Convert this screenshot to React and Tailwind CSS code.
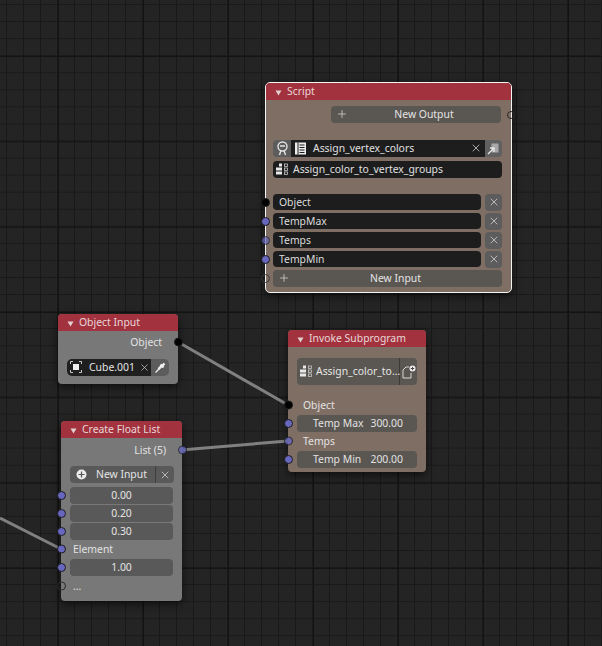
import { X, Plus } from 'lucide-react'

function Socket({ color = 'bg-[#6767c0]', side = 'left', hollow = false, dim = false }) {
  const pos = side === 'left' ? '-left-[4px]' : '-right-[4.5px]'
  if (hollow) {
    return <span className={`absolute ${pos} top-1/2 -translate-y-1/2 w-[9px] h-[9px] rounded-full border border-[#2a2a2a]`} />
  }
  return (
    <span
      className={`absolute ${pos} top-1/2 -translate-y-1/2 w-[9px] h-[9px] rounded-full border border-[#1c1c1c] ${color} ${dim ? 'opacity-80' : ''}`}
    />
  )
}

function Header({ title }) {
  return (
    <div className="h-[17px] shrink-0 rounded-t-[4px] bg-[#a3323f] flex items-center pl-[9px] gap-[5px] text-[#e8d8d8]">
      <svg width="7" height="6" viewBox="0 0 7 6" className="mt-[2px]">
        <path d="M0.5 0.5 L6.5 0.5 L3.5 5.5 Z" fill="#e0d0d0" />
      </svg>
      <span>{title}</span>
    </div>
  )
}

function Field({ children, className = '' }) {
  return (
    <div className={`h-[17px] rounded-[4px] bg-[#595959] flex items-center justify-center ${className}`}>
      {children}
    </div>
  )
}

function TextField({ label, className = '' }) {
  return (
    <div className={`h-[16px] rounded-[4px] bg-[#1d1d1d] flex items-center pl-[6px] text-[#dcdcdc] ${className}`}>
      {label}
    </div>
  )
}

function CloseBtn() {
  return (
    <div className="w-[17px] h-[17px] rounded-[4px] bg-[#5c5c5c] flex items-center justify-center">
      <X size={12} strokeWidth={1.5} color="#d8d8d8" />
    </div>
  )
}

function GroupsIcon() {
  return (
    <svg width="13" height="13" viewBox="0 0 13 13" className="shrink-0">
      <rect x="3" y="0.5" width="3" height="3" fill="#e8e8e8" />
      <rect x="0" y="4.5" width="3" height="3" fill="#e8e8e8" />
      <rect x="3" y="4.5" width="3" height="3" fill="#e8e8e8" />
      <rect x="0" y="8.5" width="3" height="3" fill="#e8e8e8" />
      <rect x="3" y="8.5" width="3" height="3" fill="#e8e8e8" />
      <rect x="8.5" y="1" width="3" height="2.5" fill="none" stroke="#c8c8c8" strokeWidth="0.8" />
      <rect x="8.5" y="5" width="3" height="2.5" fill="none" stroke="#c8c8c8" strokeWidth="0.8" />
      <rect x="8.5" y="9" width="3" height="2.5" fill="none" stroke="#c8c8c8" strokeWidth="0.8" />
    </svg>
  )
}

function ScriptNode() {
  return (
    <div className="absolute left-[265px] top-[82px] w-[247px] h-[211px] rounded-[5px] border border-[#f4f4f4] bg-[#7f6e64] flex flex-col shadow-[0_3px_8px_rgba(0,0,0,0.6)]">
      <Header title="Script" />
      <div className="relative h-[17px] mt-[6px] ml-[65px] mr-[10px]">
        <div className="h-full rounded-[4px] bg-[#5a5652] flex items-center justify-center relative text-[#e4e4e4] pb-[1px] pl-[16px]">
          <Plus size={12} strokeWidth={1.5} className="absolute left-[5px]" color="#d8d8d8" />
          New Output
        </div>
        <span className="absolute -right-[14px] top-1/2 -translate-y-1/2 w-[8px] h-[8px] rounded-full border border-[#2a2a2a]" />
      </div>

      <div className="mt-[17px] ml-[7px] mr-[9px] h-[17px] flex rounded-[4px] overflow-hidden">
        <div className="w-[18px] bg-[#5c5c5c] flex items-center justify-center">
          <svg width="13" height="15" viewBox="0 0 13 15" fill="none">
            <circle cx="6.5" cy="5.5" r="4.5" stroke="#e4e4e4" strokeWidth="1.4" />
            <path d="M4 5 h5 M3.5 14 L5 9.5 M9.5 14 L8 9.5" stroke="#e4e4e4" strokeWidth="1.4" />
          </svg>
        </div>
        <div className="flex-1 bg-[#1d1d1d] flex items-center text-[#e0e0e0] relative pl-[4px] gap-[7px] pb-[1px]">
          <svg width="11" height="13" viewBox="0 0 11 13">
            <rect x="0" y="0.5" width="11" height="12" fill="#ececec" />
            <path d="M3 0.5 V12.5 M4.5 3 H9.5 M4.5 5.5 H9.5 M4.5 8 H9.5 M4.5 10.5 H9.5" stroke="#1d1d1d" strokeWidth="1" />
          </svg>
          Assign_vertex_colors
          <X size={12} strokeWidth={1.5} color="#d8d8d8" className="absolute right-[3px]" />
        </div>
        <div className="w-[17px] bg-[#606060] flex items-center justify-center">
          <svg width="13" height="13" viewBox="0 0 13 13" fill="none">
            <rect x="4.5" y="1.5" width="7" height="9" fill="#a8a8a8" />
            <path d="M1 12 L6.5 6.5 M3 6 H7 V10" stroke="#e8e8e8" strokeWidth="1.3" />
          </svg>
        </div>
      </div>
      <div className="mt-[4px] ml-[7px] mr-[9px] h-[17px] rounded-[4px] bg-[#1d1d1d] flex items-center pl-[3px] gap-[4px] pb-[1px] text-[#e0e0e0]">
        <GroupsIcon />
        Assign_color_to_vertex_groups
      </div>

      <div className="mt-[16px] ml-[7px] mr-[9px] flex flex-col gap-[3px]">
        {[
          { label: 'Object', color: 'bg-[#000000]' },
          { label: 'TempMax' },
          { label: 'Temps', dim: true },
          { label: 'TempMin' },
        ].map(row => (
          <div key={row.label} className="relative flex items-center gap-[4px] h-[16px]">
            <span className={`absolute -left-[12px] w-[9px] h-[9px] rounded-full border border-[#1c1c1c] ${row.color ?? 'bg-[#6767c0]'} ${row.dim ? 'opacity-70' : ''}`} />
            <TextField label={row.label} className="flex-1" />
            <CloseBtn />
          </div>
        ))}
      </div>
      <div className="relative mt-[3px] ml-[7px] mr-[9px] h-[17px]">
        <span className="absolute -left-[12px] top-[4px] w-[9px] h-[9px] rounded-full border border-[#3a3a3a]" />
        <div className="h-full rounded-[4px] bg-[#5a5652] flex items-center justify-center relative text-[#e4e4e4] pb-[1px] pl-[16px]">
          <Plus size={12} strokeWidth={1.5} className="absolute left-[5px]" color="#d8d8d8" />
          New Input
        </div>
      </div>
    </div>
  )
}

function ObjectInputNode() {
  return (
    <div className="absolute left-[58px] top-[314px] w-[120px] h-[70px] rounded-[4px] bg-[#787878] flex flex-col shadow-[0_3px_8px_rgba(0,0,0,0.6)]">
      <Header title="Object Input" />
      <div className="relative h-[22px] flex items-center justify-end pr-[16px] text-[#e2e2e2]">
        Object
        <Socket color="bg-[#000000]" side="right" />
      </div>
      <div className="mt-[6px] mx-[9px] h-[17px] flex rounded-[5px] overflow-hidden">
        <div className="flex-1 bg-[#1f1f1f] flex items-center pl-[3px] gap-[7px] pb-[1px] relative text-[#e4e4e4]">
          <svg width="12" height="12" viewBox="0 0 12 12" fill="none">
            <path d="M0.5 3 V0.5 H3 M9 0.5 H11.5 V3 M11.5 9 V11.5 H9 M3 11.5 H0.5 V9" stroke="#c8c8c8" strokeWidth="1" />
            <rect x="3" y="3" width="6" height="6" fill="#f0f0f0" />
          </svg>
          Cube.001
          <X size={11} strokeWidth={1.5} color="#d8d8d8" className="absolute right-[1px]" />
        </div>
        <div className="w-[18px] bg-[#5c5c5c] flex items-center justify-center">
          <svg width="13" height="13" viewBox="0 0 13 13" fill="none">
            <path d="M1.5 11.5 L7 6" stroke="#f0f0f0" strokeWidth="1.2" />
            <path d="M4.5 8 L7.5 5" stroke="#f0f0f0" strokeWidth="2.4" />
            <path d="M6.5 3.5 L9.5 6.5 M8.5 4.5 L10.5 2.5" stroke="#f0f0f0" strokeWidth="2.4" />
          </svg>
        </div>
      </div>
    </div>
  )
}

function InvokeNode() {
  return (
    <div className="absolute left-[288px] top-[330px] w-[138px] h-[142px] rounded-[4px] bg-[#7f6e64] flex flex-col shadow-[0_3px_8px_rgba(0,0,0,0.6)]">
      <Header title="Invoke Subprogram" />
      <div className="mt-[11px] mx-[9px] h-[27px] flex rounded-[4px] overflow-hidden bg-[#5a5652] text-[#e6e6e6]">
        <div className="flex-1 min-w-0 flex items-center pl-[3px] gap-[3px] pb-[1px] border-r border-[#3c3a38]">
          <GroupsIcon />
          <span>Assign_color_to...</span>
        </div>
        <div className="w-[17px] shrink-0 flex items-center justify-center">
          <svg width="14" height="14" viewBox="0 0 14 14" fill="none">
            <path d="M1 13 V5 L4 2 H7 M1 13 H9 V8" stroke="#d8d8d8" strokeWidth="1" />
            <circle cx="10.5" cy="3.5" r="3" fill="#f0f0f0" />
            <path d="M10.5 1.8 V5.2 M8.8 3.5 H12.2" stroke="#444" strokeWidth="1" />
          </svg>
        </div>
      </div>
      <div className="mt-[11px] flex flex-col text-[#e2e2e2]">
        <div className="relative h-[18px] flex items-center pl-[15px]">
          <Socket color="bg-[#000000]" />
          Object
        </div>
        <div className="relative h-[18px] mx-[9px] flex items-center">
          <span className="absolute -left-[13px] w-[9px] h-[9px] rounded-full border border-[#1c1c1c] bg-[#6767c0]" />
          <div className="w-full h-[17px] rounded-[4px] bg-[#5a5652] flex items-center justify-between pl-[16px] pr-[14px]">
            <span>Temp Max</span>
            <span>300.00</span>
          </div>
        </div>
        <div className="relative h-[18px] flex items-center pl-[15px]">
          <Socket dim />
          Temps
        </div>
        <div className="relative h-[18px] mx-[9px] flex items-center">
          <span className="absolute -left-[13px] w-[9px] h-[9px] rounded-full border border-[#1c1c1c] bg-[#6767c0]" />
          <div className="w-full h-[17px] rounded-[4px] bg-[#5a5652] flex items-center justify-between pl-[16px] pr-[14px]">
            <span>Temp Min</span>
            <span>200.00</span>
          </div>
        </div>
      </div>
    </div>
  )
}

function FloatRow({ value }) {
  return (
    <div className="relative h-[18px] mx-[9px] flex items-center">
      <span className="absolute -left-[13px] w-[9px] h-[9px] rounded-full border border-[#1c1c1c] bg-[#6767c0]" />
      <Field className="w-full text-[#e4e4e4]">{value}</Field>
    </div>
  )
}

function FloatListNode() {
  return (
    <div className="absolute left-[61px] top-[421px] w-[121px] h-[180px] rounded-[4px] bg-[#787878] flex flex-col shadow-[0_3px_8px_rgba(0,0,0,0.6)]">
      <Header title="Create Float List" />
      <div className="relative h-[24px] flex items-center justify-end pr-[16px] text-[#e2e2e2]">
        List (5)
        <Socket side="right" dim />
      </div>
      <div className="mt-[4px] ml-[9px] mr-[8px] h-[17px] flex rounded-[4px] overflow-hidden bg-[#595959] text-[#e4e4e4]">
        <div className="flex-1 flex items-center pl-[6px] gap-[9px] pb-[1px] border-r border-[#3e3e3e]">
          <svg width="11" height="11" viewBox="0 0 11 11" className="mt-[1px]">
            <circle cx="5.5" cy="5.5" r="5" fill="#ececec" />
            <path d="M5.5 2.5 V8.5 M2.5 5.5 H8.5" stroke="#555" strokeWidth="1.2" />
          </svg>
          New Input
        </div>
        <div className="w-[18px] flex items-center justify-center">
          <X size={12} strokeWidth={1.5} color="#d8d8d8" />
        </div>
      </div>
      <div className="mt-[3px] flex flex-col">
        <FloatRow value="0.00" />
        <FloatRow value="0.20" />
        <FloatRow value="0.30" />
        <div className="relative h-[18px] flex items-center pl-[12px] text-[#e2e2e2]">
          <Socket />
          Element
        </div>
        <FloatRow value="1.00" />
        <div className="relative h-[20px] flex items-center pl-[12px] text-[#e2e2e2]">
          <Socket hollow />
          ...
        </div>
      </div>
    </div>
  )
}

export default function App() {
  return (
    <div className="relative w-[602px] h-[646px] overflow-hidden font-['Noto_Sans',sans-serif] text-[10.4px] leading-none bg-[#242424]">
      <div className="absolute inset-0 bg-[linear-gradient(to_right,#131313_1px,transparent_1px),linear-gradient(to_bottom,#131313_1px,transparent_1px),linear-gradient(to_right,#191919_1px,transparent_1px),linear-gradient(to_bottom,#191919_1px,transparent_1px)] bg-[size:85px_85.33px,85px_85.33px,17px_17.07px,17px_17.07px] bg-[position:58px_0,0_56px,6px_0,0_4px]" />
      <svg className="absolute inset-0" width="602" height="646" fill="none">
        <path d="M178 342 L288 405" stroke="#808080" strokeWidth="3" />
        <path d="M181 450 L288 441" stroke="#808080" strokeWidth="3" />
        <path d="M0 518 L61 549" stroke="#808080" strokeWidth="3" />
      </svg>
      <ScriptNode />
      <ObjectInputNode />
      <InvokeNode />
      <FloatListNode />
    </div>
  )
}
